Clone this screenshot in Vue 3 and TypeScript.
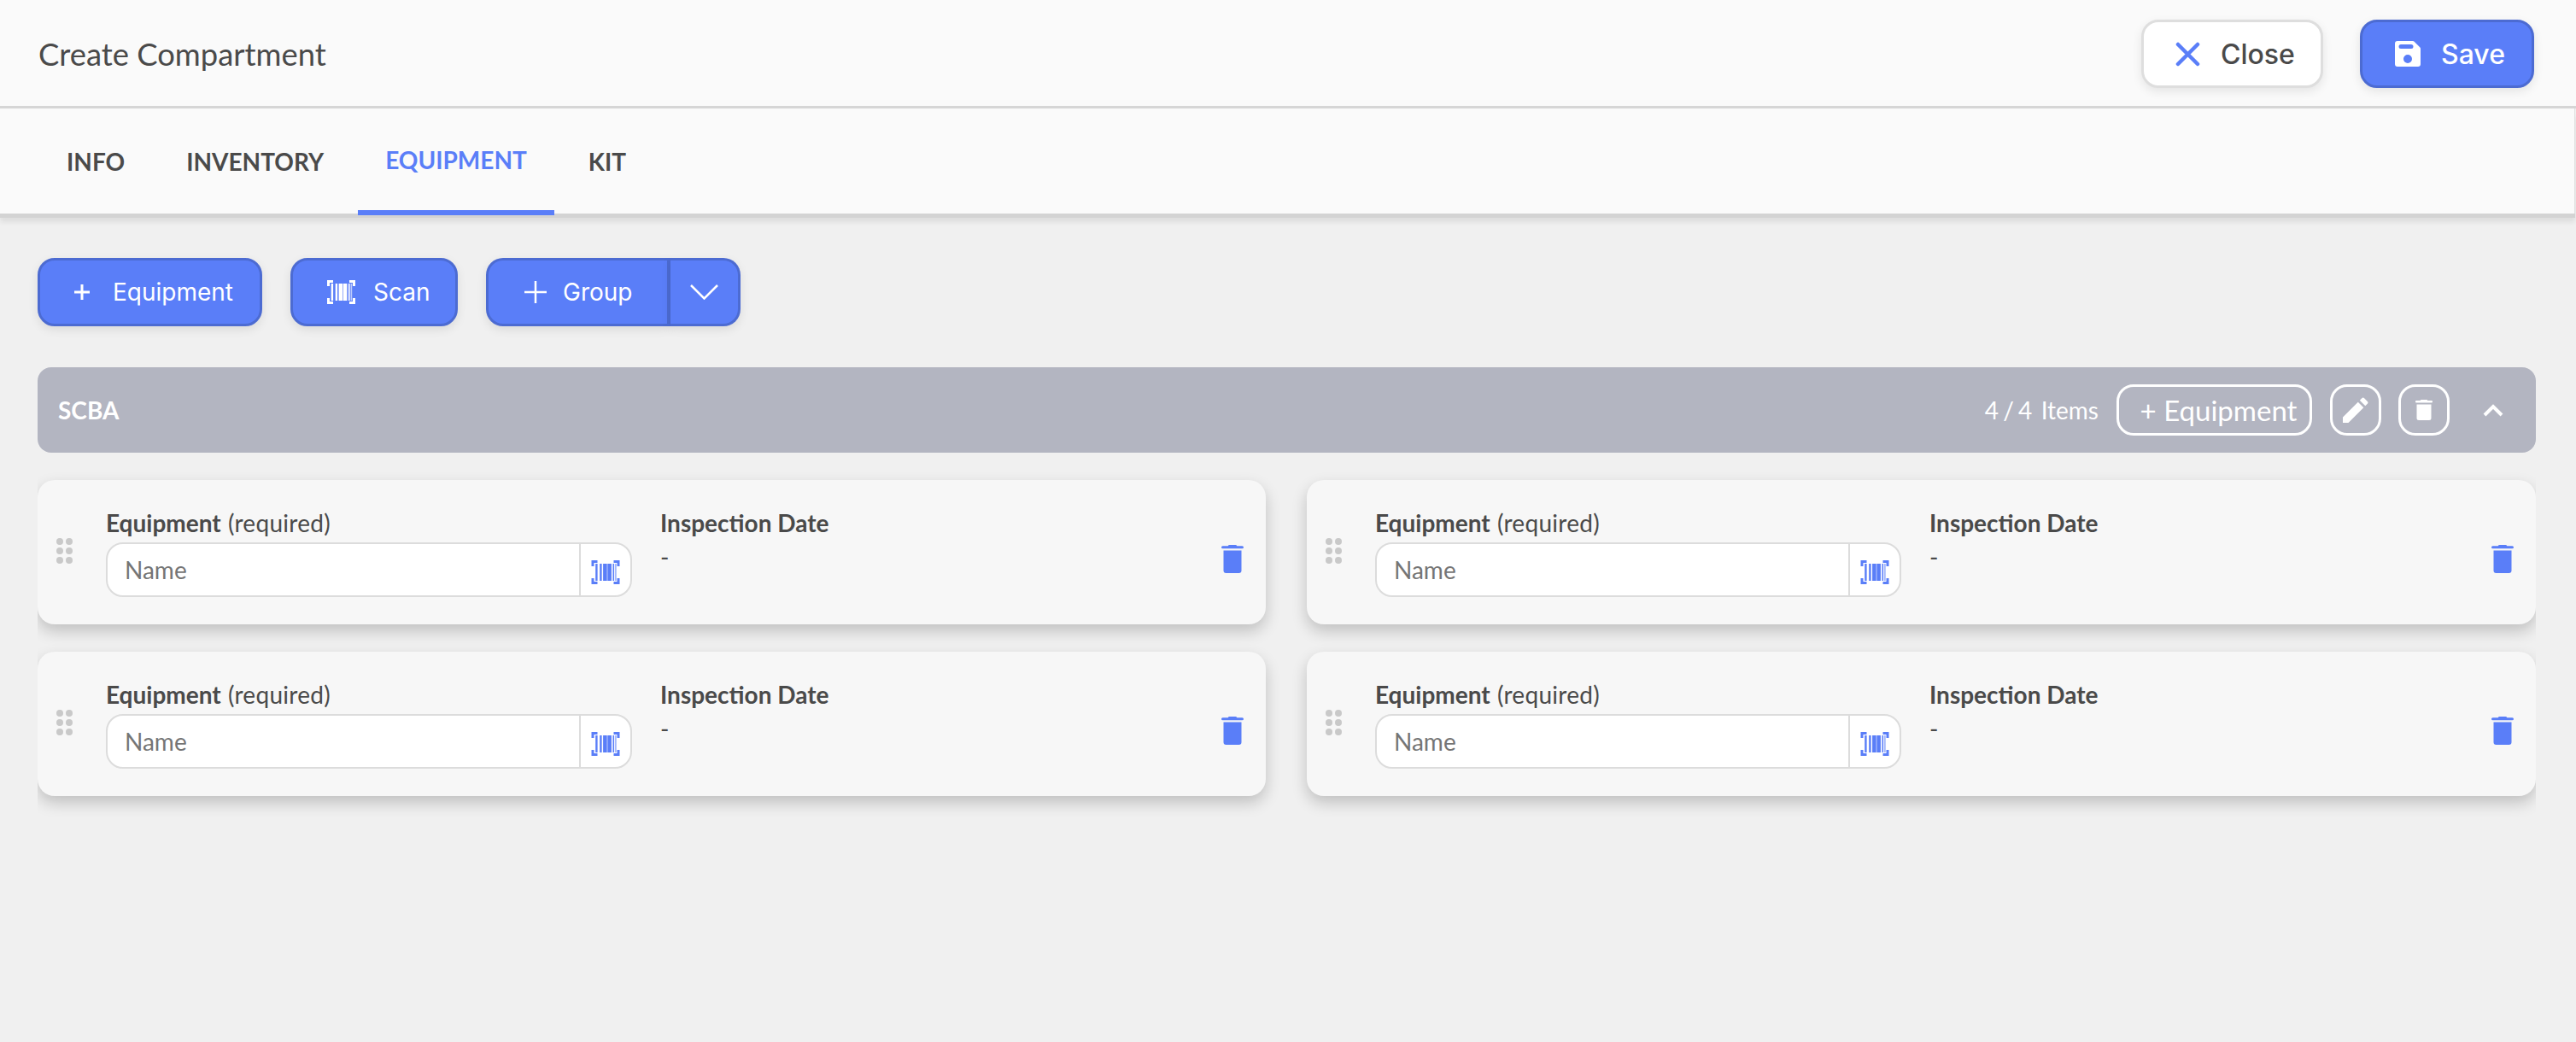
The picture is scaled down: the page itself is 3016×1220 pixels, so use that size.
<script setup lang="ts">
const tabs: { label: string; active?: boolean }[] = [
  { label: 'INFO' },
  { label: 'INVENTORY' },
  { label: 'EQUIPMENT', active: true },
  { label: 'KIT' },
]
const cards: number[] = [1, 2, 3, 4]
const bars: [number, number, number][] = [
  [4.7, 2.4, 1],
  [9.7, 2.4, 1],
  [13.6, 4.6, 1],
  [18.8, 4.6, 1],
  [25, 1.6, 1],
  [27.6, 1.6, 0.6],
]
</script>

<template>
  <div class="page">
    <header class="top">
      <h1 class="title">Create Compartment</h1>
      <div class="top-actions">
        <button class="btn btn-light">
          <svg class="ic-x" viewBox="0 0 29 29"><path d="M3 3l23 23M26 3L3 26" /></svg>
          <span>Close</span>
        </button>
        <button class="btn btn-primary btn-save">
          <svg class="ic-save" viewBox="0 0 30 30">
            <path fill-rule="evenodd" d="M3 0H21a2 2 0 0 1 1.400.600l7 7a2 2 0 0 1 .600 1.400V27a3 3 0 0 1-3 3H3a3 3 0 0 1-3-3V3a3 3 0 0 1 3-3zM7 4a2.500 2.500 0 0 0 0 5H19a2.500 2.500 0 0 0 0-5zM15 16a5 5 0 1 0 0 10a5 5 0 0 0 0-10z" />
          </svg>
          <span>Save</span>
        </button>
      </div>
    </header>

    <nav class="tabs">
      <a v-for="t in tabs" :key="t.label" class="tab" :class="{ active: t.active }">{{ t.label }}</a>
    </nav>

    <main class="content">
      <div class="toolbar">
        <button class="btn btn-primary btn-add">
          <svg class="ic-plus-s" viewBox="0 0 18 18"><path d="M9 0v18M0 9h18" /></svg>
          <span>Equipment</span>
        </button>
        <button class="btn btn-primary btn-scan">
          <svg class="ic-code" viewBox="0 0 33 28">
            <path class="corner" d="M7 1.500H1.500V7M26 1.500h5.500V7M7 26.500H1.500V21M26 26.500h5.500V21" />
            <rect v-for="b in bars" :key="b[0]" :x="b[0]" y="4" :width="b[1]" height="20" :opacity="b[2]" />
          </svg>
          <span>Scan</span>
        </button>
        <div class="split">
          <button class="btn btn-primary split-main">
            <svg class="ic-plus-l" viewBox="0 0 26 26"><path d="M13 0v26M0 13h26" /></svg>
            <span>Group</span>
          </button>
          <button class="btn btn-primary split-arrow" aria-label="More">
            <svg class="ic-chev" viewBox="0 0 33 18"><path d="M1 1l15.500 15.500L32 1" /></svg>
          </button>
        </div>
      </div>

      <section class="group">
        <strong class="group-name">SCBA</strong>
        <span class="group-count">4 / 4 &nbsp;Items</span>
        <button class="outline outline-add">+ Equipment</button>
        <button class="outline outline-icon" aria-label="Edit">
          <svg class="ic-pen" viewBox="0 0 30 30">
            <path d="M0 30v-6.500L17.800 5.700l6.500 6.500L6.500 30zM19.800 3.700l2.500-2.500a2 2 0 0 1 2.800 0l3.700 3.700a2 2 0 0 1 0 2.800l-2.500 2.500z" />
          </svg>
        </button>
        <button class="outline outline-icon" aria-label="Delete">
          <svg class="ic-bin-w" viewBox="0 0 20 24">
            <path d="M7 0h6a1.500 1.500 0 0 1 1.400 1H19a1 1 0 0 1 0 2.400H1A1 1 0 0 1 1 1h4.600A1.500 1.500 0 0 1 7 0zM1.500 5.500h17v16a2.500 2.500 0 0 1-2.500 2.500H4a2.500 2.500 0 0 1-2.500-2.500z" />
          </svg>
        </button>
        <svg class="ic-up" viewBox="0 0 24 15"><path d="M2 13L12 3l10 10" /></svg>
      </section>

      <div class="grid">
        <article v-for="c in cards" :key="c" class="card">
          <div class="drag">
            <i v-for="d in 6" :key="d" class="dot"></i>
          </div>
          <div class="field">
            <label class="label"><b>Equipment</b> <span class="req">(required)</span></label>
            <div class="input">
              <span class="placeholder">Name</span>
              <span class="addon">
                <svg class="ic-code ic-code-blue" viewBox="0 0 33 28">
                  <path class="corner" d="M7 1.500H1.500V7M26 1.500h5.500V7M7 26.500H1.500V21M26 26.500h5.500V21" />
                  <rect v-for="b in bars" :key="b[0]" :x="b[0]" y="4" :width="b[1]" height="20" :opacity="b[2]" />
                </svg>
              </span>
            </div>
          </div>
          <div class="date">
            <div class="label"><b>Inspection Date</b></div>
            <div class="dash">-</div>
          </div>
          <svg class="ic-bin" viewBox="0 0 26 33">
            <path d="M9.500 0h7a2 2 0 0 1 1.800 1.200H24.500a1.500 1.500 0 0 1 0 3H1.500a1.500 1.500 0 0 1 0-3H7.700A2 2 0 0 1 9.500 0zM2.500 6.500h21v23.500a3 3 0 0 1-3 3H5.500a3 3 0 0 1-3-3z" />
          </svg>
        </article>
      </div>
    </main>
  </div>
</template>

<style>
html, body { margin: 0; background: #f0f0f0; }
</style>

<style scoped>
.page {
  width: 3016px;
  min-height: 1220px;
  background: #f0f0f0;
  font-family: Lato, "Liberation Sans", sans-serif;
  color: #4a4a4a;
}
.top {
  height: 127px;
  box-sizing: border-box;
  padding: 23px 49px 0 45px;
  display: flex;
  justify-content: space-between;
  background: #fafafa;
  border-bottom: 3px solid #d6d6d6;
}
.title {
  margin: 0;
  font-size: 36.400px;
  font-weight: 400;
  line-height: 80px;
  height: 80px;
}
.top-actions { display: flex; gap: 43px; height: 80px; }
.btn {
  height: 80px;
  box-sizing: border-box;
  border-radius: 20px;
  font-family: Inter, "Liberation Sans", sans-serif;
  font-size: 28px;
  font-weight: 400;
  display: flex;
  align-items: center;
  padding: 0;
  box-shadow: 0 4px 12px rgba(0, 0, 0, 0.09);
}
.btn-primary { background: #5a7ef8; border: 3px solid #4c6bd2; color: #fff; }
.btn-light {
  background: #fff;
  border: 3px solid #dedede;
  color: #4a4a4a;
  width: 213px;
  padding-left: 37px;
  gap: 24px;
  font-size: 32px;
  font-weight: 500;
}
.btn-save { width: 204px; padding-left: 38px; gap: 24px; font-size: 32px; font-weight: 500; }
.ic-x { width: 29px; height: 29px; fill: none; stroke: #5a7ef8; stroke-width: 4.500; stroke-linecap: round; }
.ic-save { width: 30px; height: 30px; fill: #fff; }

.tabs {
  height: 123px;
  box-sizing: border-box;
  padding-left: 46px;
  margin-right: 1px;
  display: flex;
  gap: 8px;
  background: #fafafa;
  border-right: 1px solid #e0e0e0;
  box-shadow: 0 5px 0 #d3d3d3, 0 10px 6px rgba(0, 0, 0, 0.08);
  position: relative;
}
.tab {
  padding: 0 32px;
  display: flex;
  align-items: center;
  font-size: 28px;
  font-weight: 700;
}
.tab.active {
  color: #5a7ef8;
  height: 125px;
  box-sizing: border-box;
  border-bottom: 6px solid #5a7ef8;
}

.content { padding: 52px 47px 0 44px; }
.toolbar { display: flex; gap: 33px; }
.btn-add { width: 263px; padding-left: 40px; gap: 27px; }
.btn-scan { width: 196px; padding-left: 40px; gap: 21px; }
.ic-plus-s { width: 18px; height: 18px; fill: none; stroke: #fff; stroke-width: 3; }
.ic-plus-l { width: 26px; height: 26px; fill: none; stroke: #fff; stroke-width: 2.500; }
.ic-code { width: 33px; height: 28px; fill: #fff; }
.ic-code .corner { fill: none; stroke: #fff; stroke-width: 3; }
.ic-code-blue { width: 34px; height: 28px; fill: #5a7ef8; margin-top: 6px; }
.ic-code-blue .corner { stroke: #5a7ef8; }
.split { display: flex; }
.split-main {
  width: 216px;
  padding-left: 42px;
  gap: 19px;
  border-radius: 20px 0 0 20px;
  border-right-width: 4px;
}
.split-arrow {
  width: 82px;
  justify-content: center;
  border-radius: 0 20px 20px 0;
  border-left: 0;
}
.ic-chev { width: 33px; height: 18px; fill: none; stroke: #fff; stroke-width: 2.500; }

.group {
  margin-top: 48px;
  height: 100px;
  box-sizing: border-box;
  padding: 0 38px 0 24px;
  border-radius: 16px;
  background: #b3b5c1;
  display: flex;
  align-items: center;
  color: #fff;
}
.group-name { font-size: 28px; font-weight: 700; margin-right: auto; }
.group-count { font-size: 28px; word-spacing: -2px; margin-right: 21px; }
.outline {
  height: 60px;
  box-sizing: border-box;
  background: transparent;
  border: 3px solid #fff;
  border-radius: 20px;
  color: #fff;
  font-family: Lato, "Liberation Sans", sans-serif;
  padding: 0;
  display: flex;
  align-items: center;
  justify-content: center;
}
.outline-add { width: 229px; font-size: 33px; padding-left: 10px; margin-right: 21px; }
.outline-icon { width: 60px; margin-right: 20px; }
.ic-pen { width: 30px; height: 30px; fill: #fff; }
.ic-bin-w { width: 20px; height: 24px; fill: #fff; }
.ic-up { width: 24px; height: 15px; margin-left: 19px; fill: none; stroke: #fff; stroke-width: 4; }

.grid {
  padding: 32px 0 30px;
  overflow: hidden;
  display: grid;
  grid-template-columns: 1438px 1fr;
  gap: 32px 48px;
}
.card {
  height: 169px;
  box-sizing: border-box;
  padding: 33px 26px 32px 22px;
  display: flex;
  align-items: flex-start;
  border-radius: 20px;
  background: #f7f7f7;
  box-shadow: 0 8px 18px rgba(0, 0, 0, 0.2);
}
.drag {
  width: 19px;
  margin-top: 35px;
  margin-right: 39px;
  display: grid;
  grid-template-columns: 8px 8px;
  gap: 3px 3px;
}
.dot { width: 8px; height: 8px; border-radius: 50%; background: #c9c9c9; }
.field { width: 616px; flex: none; }
.label { display: block; font-size: 28px; line-height: 34px; margin-bottom: 6px; }
.label b { font-weight: 700; }
.req { letter-spacing: 0.3px; margin-left: 1px; }
.input {
  height: 64px;
  box-sizing: border-box;
  border: 2px solid #dcdcdc;
  border-radius: 20px;
  background: #fff;
  display: flex;
  align-items: center;
  overflow: hidden;
}
.placeholder { flex: 1; padding-left: 20px; font-size: 28px; color: #757575; }
.addon {
  width: 60px;
  height: 100%;
  box-sizing: border-box;
  border-left: 2px solid #dcdcdc;
  display: flex;
  align-items: center;
  justify-content: center;
}
.date { margin-left: 33px; flex: 1; }
.dash { font-size: 28px; line-height: 34px; margin-top: 6px; }
.ic-bin { width: 26px; height: 33px; fill: #5a7ef8; margin-top: 43px; }
</style>
